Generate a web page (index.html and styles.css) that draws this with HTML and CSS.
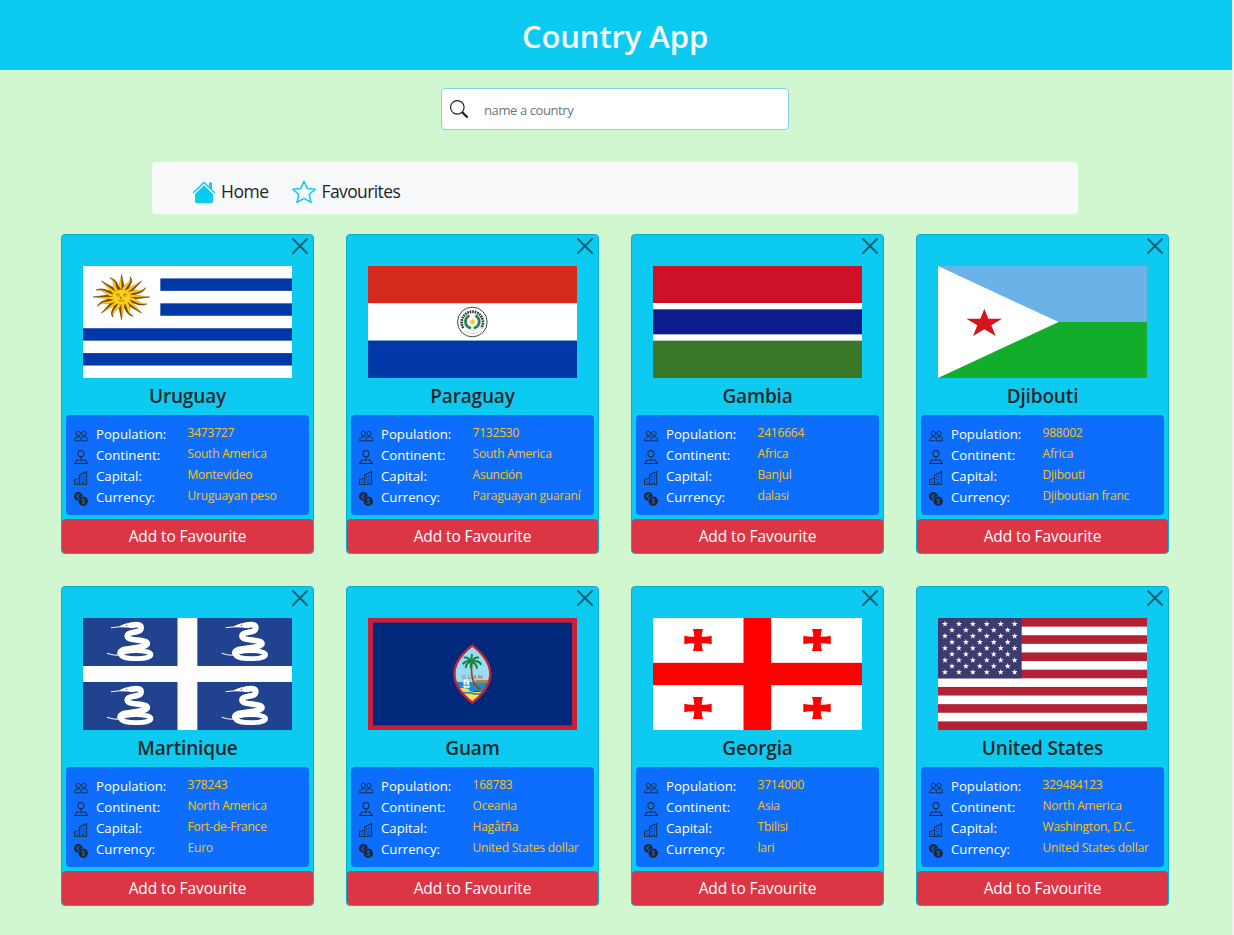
FILE: index.html
```html
<!DOCTYPE html>
<html lang="en">
<head>
<meta charset="utf-8">
<title>Country App</title>
<link rel="stylesheet" href="styles.css">
</head>
<body>
<svg class="defs" width="0" height="0" aria-hidden="true">
  <defs>
    <symbol id="people" viewBox="0 0 16 16">
      <g fill="none" stroke="currentColor" stroke-width="1.05">
        <circle cx="5" cy="5.2" r="2.5"/><circle cx="11.5" cy="5.2" r="2.5"/>
        <path d="M.8 13.5v-1.2C1 10 2.7 9 5 9s3 .8 3.4 1.4M.6 13.5H7M8 13.5v-1.2c.2-2.2 1.600-3.300 3.800-3.300s3.700 1 3.800 3.300v1.200z"/>
      </g>
    </symbol>
    <symbol id="place" viewBox="0 0 16 16">
      <g fill="none" stroke="currentColor" stroke-width="1.15">
        <circle cx="8" cy="4.200" r="3.500"/><path d="M8 7.600v5.400M6.500 11.500H3.300L.8 15.300h14.400l-2.500-3.800H9.500"/>
      </g>
    </symbol>
    <symbol id="buildings" viewBox="0 0 16 16">
      <path fill="currentColor" d="M14.763.075A.5.5 0 0 1 15 .5v15a.5.5 0 0 1-.5.5h-3a.5.5 0 0 1-.5-.5V14h-1v1.500a.5.5 0 0 1-.5.500h-9a.5.500 0 0 1-.5-.5V10a.5.5 0 0 1 .342-.474L6 7.640V4.500a.5.5 0 0 1 .276-.447l8-4a.5.5 0 0 1 .487.022zM6 8.694 1 10.360V15h5V8.694zM7 15h2v-1.500a.5.5 0 0 1 .5-.5h2a.5.5 0 0 1 .5.5V15h2V1.309l-7 3.500V15z"/>
      <path fill="currentColor" d="M2 11h1v1H2zM4 11h1v1H4zM2 13h1v1H2zM4 13h1v1H4zM8 9h1v1H8zM10 9h1v1h-1zM8 11h1v1H8zM10 11h1v1h-1zM12 9h1v1h-1zM12 11h1v1h-1zM8 7h1v1H8zM10 7h1v1h-1zM12 7h1v1h-1zM8 5h1v1H8zM10 5h1v1h-1zM12 5h1v1h-1zM12 3h1v1h-1z"/>
    </symbol>
    <symbol id="coins" viewBox="0 0 16 16">
      <circle cx="5" cy="5" r="5" fill="currentColor"/>
      <path d="M6.700 3C5 2.100 3.600 3.200 3.600 5s1 2.700 2 2.500M2.700 4.500h3M2.700 5.800h2.500" fill="none" stroke="#0d6efd" stroke-width=".9"/>
      <circle cx="10.600" cy="10.600" r="5.900" fill="#0d6efd"/>
      <circle cx="10.600" cy="10.600" r="5.400" fill="currentColor"/>
      <path d="M12.300 9.300c-.2-1.700-3.300-1.600-3.300 0 0 1.700 3.500.9 3.500 2.700 0 1.600-3.500 1.600-3.700-.2M10.700 7.200v7" fill="none" stroke="#0d6efd" stroke-width=".8"/>
    </symbol>
    <symbol id="cross" viewBox="0 0 16 16">
      <path d="M1 1l14 14M15 1L1 15" stroke="currentColor" stroke-width="2" stroke-linecap="round"/>
    </symbol>
    <g id="snake">
      <path d="M84 29l30-3M72 106q18 7 45 6" fill="none" stroke="#fff" stroke-width="3"/>
      <path d="M110 25Q130 12 152 15L155 30Q136 29 112 28z" fill="#fff"/>
      <path d="M144 22C166 17 176 21 174 32C172 47 131 39 133 55C135 71 193 62 193 77C191 93 113 85 111 105" fill="none" stroke="#fff" stroke-width="17" stroke-linecap="round"/>
      <ellipse cx="159" cy="110" rx="45" ry="12" fill="none" stroke="#fff" stroke-width="14"/>
      <circle cx="131" cy="22" r="2" fill="#21428f"/>
    </g>
    <path id="bolnur" fill="red" d="M-15-33H15Q11-21 11-10Q26-9 41-13V13Q26 9 11 10Q11 21 15 33H-15Q-11 21-11 10Q-26 9-41 13V-13Q-26-9-11-10Q-11-21-15-33z"/>
    <g id="ray" stroke="#7b3f00" stroke-width="1"><path d="M0-85L10-24H-10z" fill="#fcd116"/><path d="M0-85L10-24H1z" fill="#7b3f00"/></g>
    <g id="wave" stroke="#7b3f00" stroke-width="1"><path d="M-9-24C-16-48 8-58-5-80C15-64 2-46 10-24z" fill="#fcd116"/><path d="M2-24C-6-44 13-56-5-80C15-64 2-46 10-24z" fill="#7b3f00"/></g>
  </defs>
</svg>

<div class="page">
  <header class="header"><h1 class="brand">Country App</h1></header>

  <div class="search">
    <svg class="search-icon" viewBox="0 0 16 16"><path fill="currentColor" d="M11.742 10.344a6.500 6.500 0 1 0-1.397 1.398h-.001c.03.04.062.078.098.115l3.850 3.850a1 1 0 0 0 1.415-1.414l-3.850-3.850a1.007 1.007 0 0 0-.115-.1zM12 6.500a5.500 5.500 0 1 1-11 0 5.500 5.500 0 0 1 11 0z"/></svg>
    <input class="search-input" type="text" placeholder="name a country">
  </div>

  <nav class="nav">
    <a class="nav-link"><svg class="nav-icon" viewBox="0 0 24 24"><g fill="none" stroke="currentColor" stroke-width="1.500" stroke-linecap="round" stroke-linejoin="round"><path d="M1.500 12.500L12 2.500l10.500 10"/></g><path fill="currentColor" d="M17 2.500h3v7l-3-3zM12 5.300l9 8.700v7.200a2 2 0 0 1-2 2H5a2 2 0 0 1-2-2V14z"/></svg><span class="home-text">Home</span></a>
    <a class="nav-link"><svg class="nav-icon star" viewBox="0 0 24 24"><path d="M12 1.200l3.200 7.300 8 .7-6 5.300 1.800 7.900-7-4.100-7 4.100 1.800-7.900-6-5.300 8-.7z" fill="none" stroke="currentColor" stroke-width="1.500" stroke-linejoin="round"/></svg><span class="fav-text">Favourites</span></a>
  </nav>

  <main class="grid" id="grid"></main>
</div>
<script src="script.js"></script>
</body>
</html>
```

FILE: styles.css
```css
* { box-sizing: border-box; }
body {
  margin: 0;
  background: #f0f0f0;
  color: #212529;
  font-family: "Segoe UI", "Open Sans", "Noto Sans", sans-serif;
  overflow: hidden;
}
.defs { display: block; }
.page {
  width: 1232px;
  height: 935px;
  background: #d1f7d0;
  display: flex;
  flex-direction: column;
}
.header {
  height: 70px;
  padding: 2px 2px 0 0;
  background: #0dcaf0;
  display: flex;
  align-items: center;
  justify-content: center;
}
.brand {
  margin: 0;
  color: #f8f9fa;
  font-size: 31px;
  line-height: 38px;
  font-weight: 600;
  letter-spacing: -.1px;
}
.search {
  width: 348px;
  height: 42px;
  margin: 18px 0 0 441px;
  padding: 0 8px;
  border: 1px solid #87ceeb;
  border-radius: 4px;
  background: #fff;
  display: flex;
  align-items: center;
  gap: 16px;
}
.search-icon { width: 18px; height: 18px; }
.search-input {
  flex: 1;
  min-width: 0;
  border: 0;
  outline: 0;
  padding: 1px 0 0;
  font: 13px "Segoe UI", "Open Sans", sans-serif;
  letter-spacing: -.4px;
}
.search-input::placeholder { color: #6c757d; }
.nav {
  width: 926px;
  height: 52px;
  margin: 32px 0 0 152px;
  padding: 8px 40px 0;
  border-radius: 4px;
  background: #f8f9fa;
  display: flex;
  align-items: center;
  gap: 24px;
}
.nav-link {
  display: flex;
  align-items: center;
  gap: 5px;
  font-size: 17.500px;
  line-height: 24px;
}
.home-text, .fav-text { margin-top: -2px; }
.home-text { letter-spacing: -.5px; }
.fav-text { letter-spacing: -.6px; }
.nav-icon { width: 24px; height: 24px; color: #0dcaf0; }
.grid {
  margin: 20px 0 0 61px;
  display: grid;
  grid-template-columns: repeat(4, 253px);
  gap: 32px;
}
.card {
  height: 320px;
  border: 1px solid #0baccc;
  border-radius: 4px;
  background: #0dcaf0;
  display: flex;
  flex-direction: column;
  align-items: center;
}
.close {
  width: 16px;
  height: 16px;
  margin: 3px 5px 0 0;
  align-self: flex-end;
  color: #000;
  opacity: .5;
}
.flag { width: 209px; height: 112px; margin-top: 12px; display: block; }
.name {
  margin: 6px 0 0;
  font-size: 19px;
  line-height: 24px;
  font-weight: 600;
  letter-spacing: -.15px;
}
.info {
  width: 243px;
  height: 100px;
  margin: 7px 0 0;
  padding: 8px;
  border-radius: 4px;
  background: #0d6efd;
}
.row {
  height: 21px;
  display: grid;
  grid-template-columns: 14px 83.500px 1fr;
  column-gap: 8px;
}
.row-icon { width: 14px; height: 14px; margin-top: 6px; }
.label { color: #fff; font-size: 13.200px; line-height: 22px; }
.value { color: #ffc107; font-size: 12px; line-height: 20px; white-space: nowrap; letter-spacing: -.2px; }
.add {
  width: 251px;
  height: 34px;
  margin-top: 4px;
  padding: 0;
  border: 0;
  border-radius: 4px;
  background: #dc3545;
  color: #fff;
  font: 15.500px/34px "Segoe UI", "Open Sans", sans-serif;
  letter-spacing: -.1px;
}
```

FILE: script.js
```js
const rect = (x, y, w, h, fill) => `<rect x="${x}" y="${y}" width="${w}" height="${h}" fill="${fill}"/>`;

function starPoints(cx, cy, r) {
  const points = [];
  for (let i = 0; i < 10; i++) {
    const a = -Math.PI / 2 + i * Math.PI / 5;
    const d = i % 2 ? r * 0.4 : r;
    points.push(`${(cx + d * Math.cos(a)).toFixed(2)},${(cy + d * Math.sin(a)).toFixed(2)}`);
  }
  return points.join(' ');
}

function uruguay() {
  let rays = '';
  for (let i = 0; i < 16; i++) rays += `<use href="#${i % 2 ? 'wave' : 'ray'}" transform="rotate(${i * 22.5})"/>`;
  return rect(0, 0, 627, 336, '#fff') + rect(232, 37.3, 395, 37.3, '#0038a8') + rect(232, 112, 395, 37.3, '#0038a8') +
    rect(0, 186.700, 627, 37.3, '#0038a8') + rect(0, 261.3, 627, 37.3, '#0038a8') +
    `<g transform="translate(115.500 93) scale(1 .8)">${rays}<circle r="28" fill="#fcd116" stroke="#c48a00" stroke-width="1"/>
    <path d="M-17-9q7-5 12 0M5-9q6-5 12 0M-14-4h8M6-4h8M-2-3l-2 9h7M-9 13q9 5 18 0" fill="none" stroke="#7b3f00" stroke-width="2"/></g>`;
}

function paraguay() {
  return rect(0, 0, 627, 112, '#d52b1e') + rect(0, 112, 627, 112, '#fff') + rect(0, 224, 627, 112, '#0038a8') +
    `<g transform="translate(313 168)"><circle r="44.500" fill="#fff" stroke="#222" stroke-width="2.500"/>
    <path d="M-27 18A32 32 0 1 1 27 18" fill="none" stroke="#333" stroke-width="8" stroke-dasharray="5 2.500"/>
    <circle r="25" fill="none" stroke="#999" stroke-width="1"/><path d="M-24 27Q0 43 24 27" fill="none" stroke="#aaa" stroke-width="1.500"/>
    <path d="M-9-19C-25-10-25 12-4 19M9-19C25-10 25 12 4 19" fill="none" stroke="#23814a" stroke-width="8"/>
    <polygon points="${starPoints(0, 0, 11)}" fill="#f8c300"/></g>`;
}

function guam() {
  return rect(0, 0, 627, 336, '#c62139') + rect(15, 14, 597, 308, '#00297b') +
    `<clipPath id="seal"><path d="M313 84C382 139 382 197 313 252C244 197 244 139 313 84z"/></clipPath>
    <g clip-path="url(#seal)">${rect(255, 80, 120, 115, '#9bdcf5')}${rect(255, 192, 120, 28, '#2389c9')}
    <path d="M311 195h60v-9h-45z" fill="#a58b4b"/><path d="M255 212q28-5 50 2q-10 6 15 8q25 2 55-9v70H255z" fill="#ffdf58"/>
    <path d="M275 226q20-5 42 1q15 3 38-2" fill="none" stroke="#2389c9" stroke-width="5"/></g>
    <path d="M312 132q-5 38 6 63q8 15 20 19" fill="none" stroke="#8b4d17" stroke-width="5"/>
    <path d="M311 132Q296 124 284 139M311 132Q295 132 293 150M311 132Q307 140 309 151M311 132Q326 136 327 152M311 132Q330 124 340 140M311 132Q319 116 333 119M311 132Q300 115 287 119M311 132Q310 118 312 108" fill="none" stroke="#168447" stroke-width="6"/>
    <path d="M293 202v-24q-7 10-7 20zM296 200v-18q9 8 8 18zM284 203h23l-3 6h-16z" fill="#fff"/>
    <text class="guam-text" x="283" y="182" fill="#d7374b" font-family="Liberation Sans, sans-serif" font-size="16" textLength="61">GUAM</text>
    <path d="M313 82C385 139 385 197 313 254C241 197 241 139 313 82z" fill="none" stroke="#c62139" stroke-width="7"/>`;
}

function usa() {
  let out = rect(0, 0, 627, 336, '#fff');
  for (let i = 0; i < 13; i += 2) out += rect(0, i * 336 / 13, 627, 336 / 13, '#b22234');
  out += rect(0, 0, 251, 181, '#3c3b6e');
  for (let r = 0; r < 9; r++) {
    for (let c = 0; c < 6 - r % 2; c++) out += `<polygon points="${starPoints(21 + c * 41.8 + (r % 2) * 20.900, 18.1 + r * 18.1, 9.5)}" fill="#fff"/>`;
  }
  return out;
}

const flags = {
  uruguay: uruguay(),
  paraguay: paraguay(),
  gambia: rect(0, 0, 627, 336, '#fff') + rect(0, 0, 627, 111, '#ce1126') + rect(0, 130, 627, 75, '#0c1c8c') + rect(0, 224, 627, 112, '#3a7728'),
  djibouti: rect(0, 0, 627, 168, '#6ab2e7') + rect(0, 168, 627, 168, '#12ad2b') +
    '<path d="M0 0L362 168L0 336z" fill="#fff"/><path d="M139 128l12 30h41l-32 20 13 32-34-20-34 20 13-32-33-20h42z" fill="#d7141a"/>',
  martinique: rect(0, 0, 627, 336, '#21428f') + rect(283.500, 0, 59.500, 336, '#fff') + rect(0, 144, 627, 48, '#fff') +
    '<use href="#snake"/><use href="#snake" x="344"/><use href="#snake" y="192"/><use href="#snake" x="344" y="192"/>',
  guam: guam(),
  georgia: rect(0, 0, 627, 336, '#fff') + rect(271.500, 0, 83, 336, 'red') + rect(0, 134.500, 627, 67, 'red') +
    '<use href="#bolnur" x="135" y="66"/><use href="#bolnur" x="492" y="66"/><use href="#bolnur" x="135" y="270"/><use href="#bolnur" x="492" y="270"/>',
  usa: usa()
};

const countries = [
  ['Uruguay', 'uruguay', '3473727', 'South America', 'Montevideo', 'Uruguayan peso'],
  ['Paraguay', 'paraguay', '7132530', 'South America', 'Asunción', 'Paraguayan guaraní'],
  ['Gambia', 'gambia', '2416664', 'Africa', 'Banjul', 'dalasi'],
  ['Djibouti', 'djibouti', '988002', 'Africa', 'Djibouti', 'Djiboutian franc'],
  ['Martinique', 'martinique', '378243', 'North America', 'Fort-de-France', 'Euro'],
  ['Guam', 'guam', '168783', 'Oceania', 'Hagåtña', 'United States dollar'],
  ['Georgia', 'georgia', '3714000', 'Asia', 'Tbilisi', 'lari'],
  ['United States', 'usa', '329484123', 'North America', 'Washington, D.C.', 'United States dollar']
];
const fields = [['Population:', 'people'], ['Continent:', 'place'], ['Capital:', 'buildings'], ['Currency:', 'coins']];

document.getElementById('grid').innerHTML = countries.map(([name, flag, ...values]) => `
  <article class="card">
    <svg class="close"><use href="#cross"/></svg>
    <svg class="flag" viewBox="0 0 627 336" preserveAspectRatio="none">${flags[flag]}</svg>
    <h2 class="name">${name}</h2>
    <div class="info">${fields.map(([label, icon], i) => `
      <div class="row"><svg class="row-icon"><use href="#${icon}"/></svg><span class="label">${label}</span><span class="value">${values[i]}</span></div>`).join('')}
    </div>
    <button class="add">Add to Favourite</button>
  </article>`).join('');
```
